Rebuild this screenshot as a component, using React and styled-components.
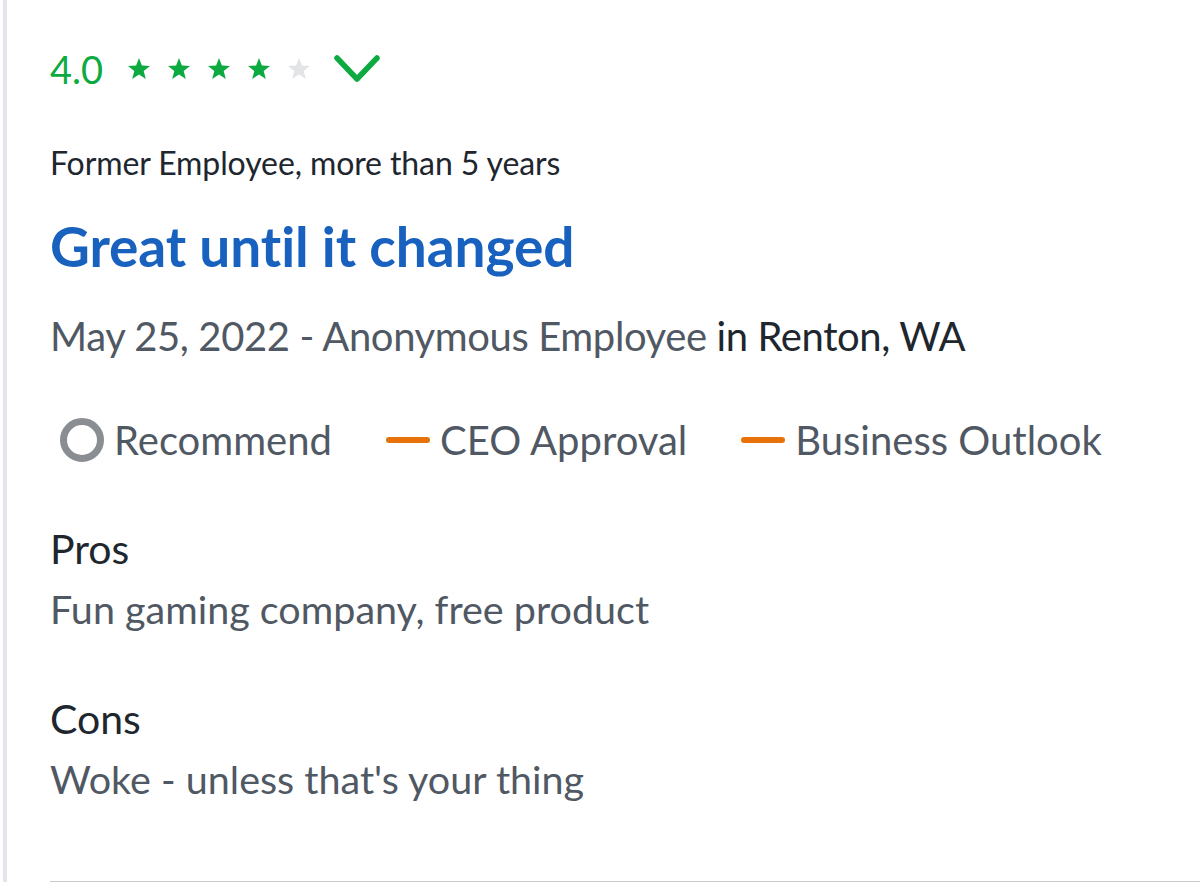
import React from 'react'
import styled, { createGlobalStyle } from 'styled-components'

const GlobalStyle = createGlobalStyle`
  html, body { margin: 0; padding: 0; background: #fff; }
  body { font-family: Lato, "Open Sans", sans-serif; }
`

const Page = styled.div`
  min-height: 882px;
  border-left: 4px solid #e4e4ee;
  margin-left: 3px;
  padding-left: 43px;
  box-sizing: border-box;
`

const Review = styled.div`
  padding-top: 44px;
  padding-bottom: 79px;
  border-bottom: 4px solid #c9cacf;
`

const RatingRow = styled.div`
  display: flex;
  align-items: center;
  height: 50px;
`

const Score = styled.span`
  font-size: 38px;
  color: #0caa41;
  margin-right: 24px;
`

const Stars = styled.div`
  display: flex;
  gap: 16px;
  margin-right: 22px;
`

const Chevron = styled.svg`
  width: 48px;
  height: 30px;
`

const Tenure = styled.div`
  font-size: 32px;
  color: #20262e;
  margin-top: 49px;
  letter-spacing: -0.1px;
`

const Title = styled.h2`
  margin: 31px 0 0;
  font-size: 55px;
  font-weight: 700;
  color: #1861bf;
  line-height: 1.2;
  letter-spacing: -0.1px;
`

const Meta = styled.div`
  font-size: 40px;
  color: #505863;
  margin-top: 33px;
  letter-spacing: -0.4px;
`

const Dark = styled.span`
  color: #20262e;
`

const Badges = styled.div`
  display: flex;
  align-items: center;
  gap: 54px;
  margin-top: 56px;
  margin-left: 10px;
`

const Badge = styled.div`
  display: flex;
  align-items: center;
  gap: 10px;
  font-size: 40px;
  color: #505863;
`

const Ring = styled.span`
  width: 30px;
  height: 30px;
  border: 7px solid #8a8d92;
  border-radius: 50%;
`

const Dash = styled.span`
  width: 44px;
  height: 6px;
  border-radius: 3px;
  background: #e8710a;
`

const Section = styled.div`
  margin-top: ${p => p.first ? 60 : 62}px;
`

const Label = styled.div`
  font-size: 41px;
  color: #20262e;
`

const Body = styled.div`
  font-size: 39.5px;
  color: #505863;
  margin-top: 12px;
`

const Star = ({ on }) => (
  <svg width="24" height="22" viewBox="0 0 24 22">
    <path
      d="M12 0l2.9 7.6 8.1.4-6.3 5.1 2.1 7.9L12 16.6 5.2 21l2.1-7.9L1 8l8.1-.4z"
      fill={on ? '#0caa41' : '#e2e4e8'}
    />
  </svg>
)

export default function App() {
  return (
    <Page>
      <GlobalStyle />
      <Review>
        <RatingRow>
          <Score>4.0</Score>
          <Stars>
            {[1, 2, 3, 4, 5].map(n => <Star key={n} on={n <= 4} />)}
          </Stars>
          <Chevron viewBox="0 0 48 30">
            <path d="M4 4l20 21L44 4" fill="none" stroke="#0caa41" strokeWidth="5.5" strokeLinecap="round" strokeLinejoin="round" />
          </Chevron>
        </RatingRow>
        <Tenure>Former Employee, more than 5 years</Tenure>
        <Title>Great until it changed</Title>
        <Meta>May 25, 2022 - Anonymous Employee <Dark>in Renton, WA</Dark></Meta>
        <Badges>
          <Badge><Ring />Recommend</Badge>
          <Badge><Dash />CEO Approval</Badge>
          <Badge><Dash />Business Outlook</Badge>
        </Badges>
        <Section first>
          <Label>Pros</Label>
          <Body>Fun gaming company, free product</Body>
        </Section>
        <Section>
          <Label>Cons</Label>
          <Body>Woke - unless that's your thing</Body>
        </Section>
      </Review>
    </Page>
  )
}
